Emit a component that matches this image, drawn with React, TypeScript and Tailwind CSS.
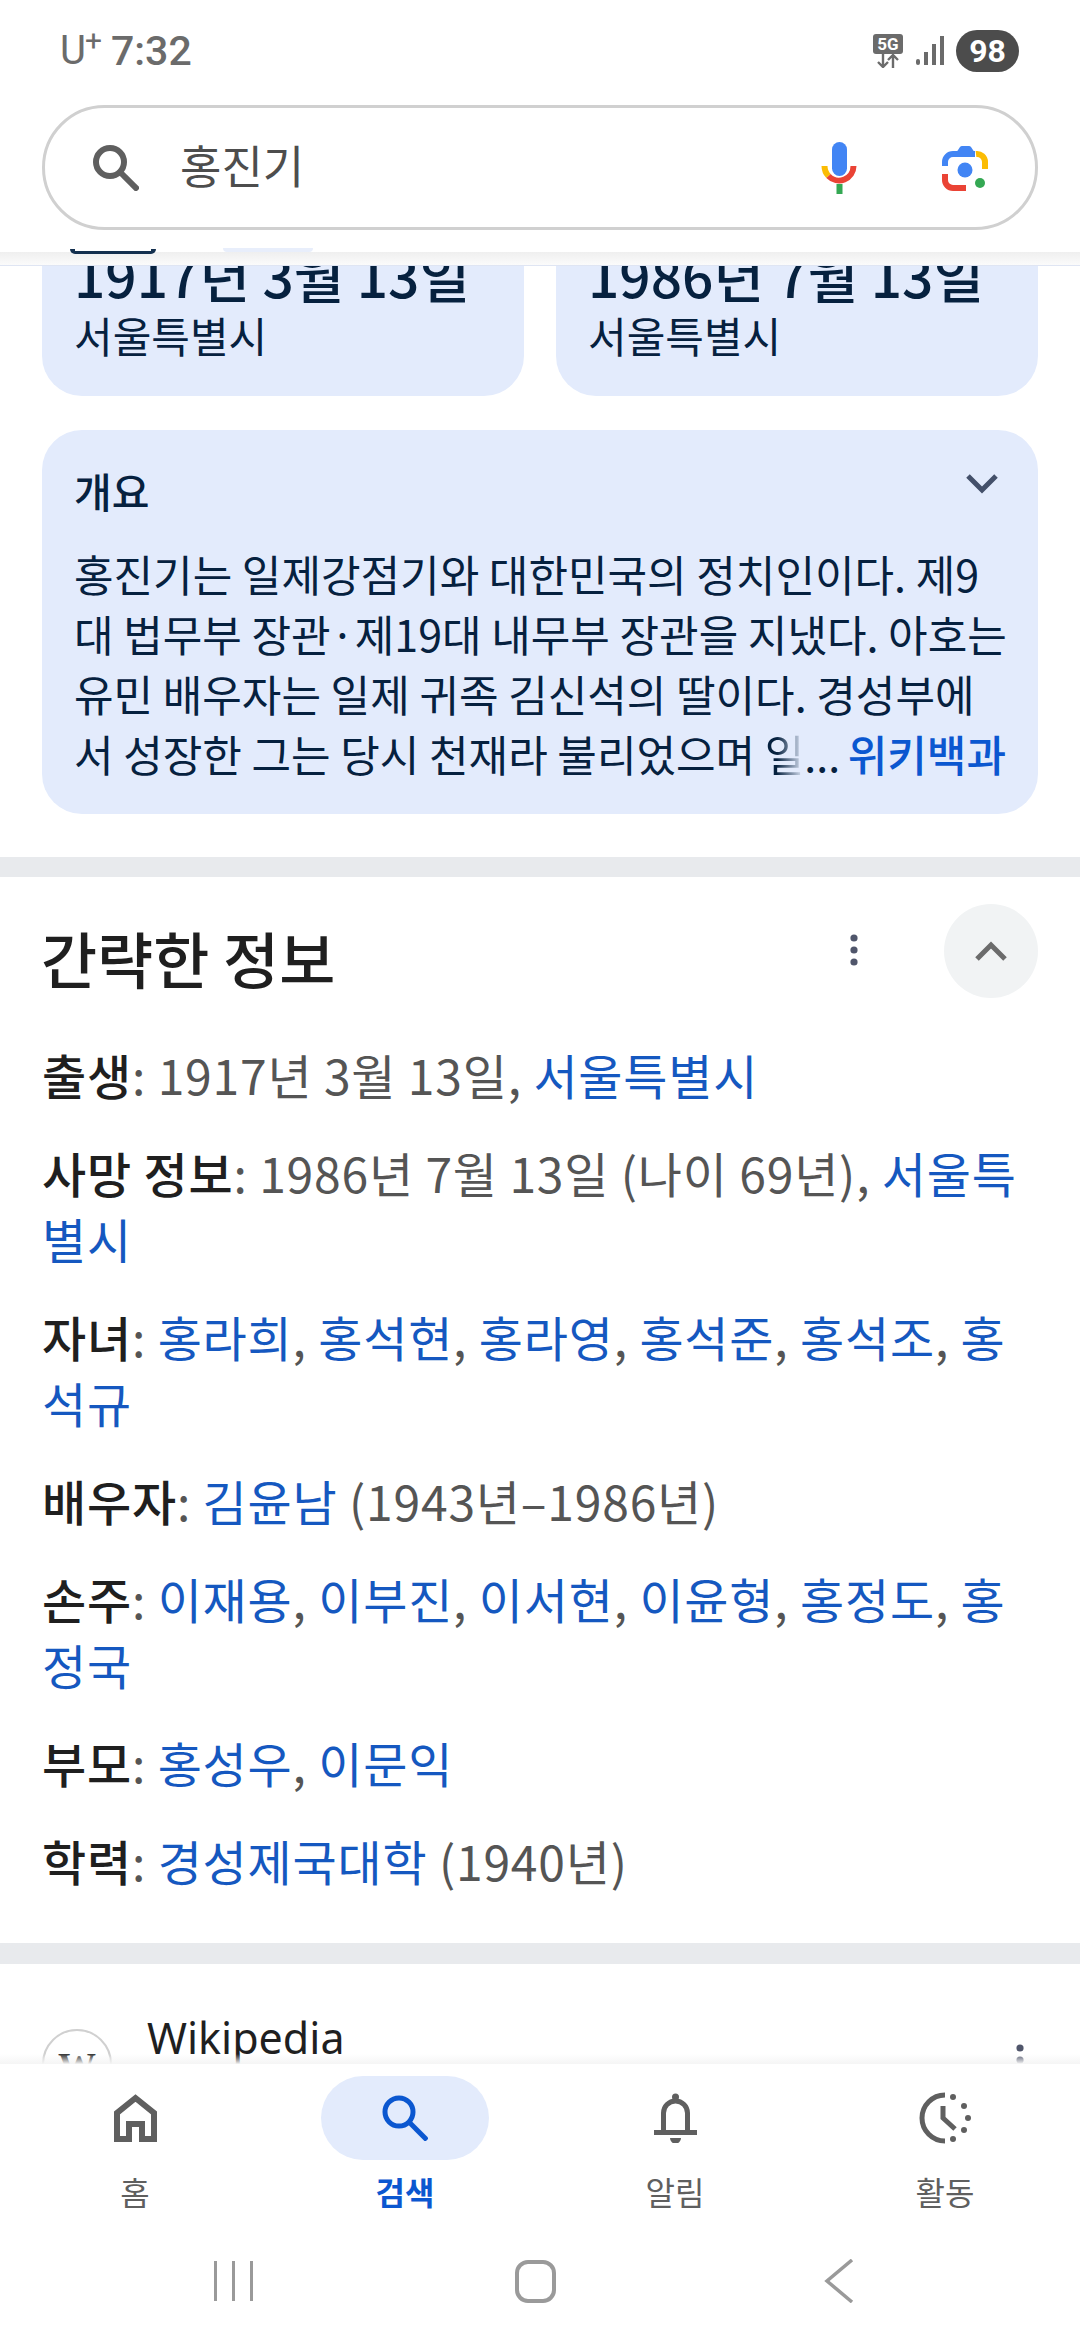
import React from 'react';

const FONT = "font-['Noto_Sans_CJK_KR','Noto_Sans',sans-serif]";

const SearchGlyph = ({ className, strokeWidth = 6 }: { className?: string; strokeWidth?: number }) => (
  <svg viewBox="0 0 46 46" fill="none" stroke="currentColor" strokeWidth={strokeWidth} className={className}>
    <circle cx="17" cy="17" r="14" />
    <path d="M27 27 45 45" />
  </svg>
);

const Kebab = ({ className }: { className?: string }) => (
  <svg viewBox="0 0 8 32" fill="currentColor" className={className}>
    <circle cx="4" cy="4" r="3.6" />
    <circle cx="4" cy="16" r="3.6" />
    <circle cx="4" cy="28" r="3.6" />
  </svg>
);

const MicIcon = () => (
  <svg viewBox="0 0 36 52" fill="none" className="w-[36px] h-[52px]">
    <rect x="11" y="0" width="15" height="34" rx="7.5" fill="#4285f4" />
    <path d="M3.5 24a14.5 14.5 0 0 0 4 10" stroke="#fbbc04" strokeWidth="6" />
    <path d="M7.5 34a14.5 14.5 0 0 0 25-10" stroke="#ea4335" strokeWidth="6" />
    <rect x="15.5" y="42" width="6" height="10" fill="#34a853" />
  </svg>
);

const LensIcon = () => (
  <svg viewBox="0 0 46 46" fill="none" className="w-[46px] h-[46px]">
    <path d="M3 21v-4a8 8 0 0 1 8-8h22" stroke="#4285f4" strokeWidth="6" />
    <path d="M14 8l4-6a3 3 0 0 1 2-1h7a3 3 0 0 1 2 1l4 6z" fill="#4285f4" />
    <path d="M34 9a8 8 0 0 1 9 8v7" stroke="#fbbc04" strokeWidth="6" />
    <path d="M3 29v6a8 8 0 0 0 8 8h13" stroke="#ea4335" strokeWidth="6" />
    <circle cx="23" cy="25" r="7.5" fill="#4285f4" />
    <circle cx="38" cy="38" r="5" fill="#34a853" />
  </svg>
);

const HomeIcon = () => (
  <svg viewBox="0 0 43 48" fill="none" stroke="#5f5f5f" strokeWidth="6" className="w-[43px] h-[48px]">
    <path d="M3 45V19L21.5 4 40 19v26H28V30H15v15z" />
  </svg>
);

const BellIcon = () => (
  <svg viewBox="0 0 43 50" fill="#5f5f5f" className="w-[43px] h-[50px]">
    <path d="M9.5 40V20a12 12 0 0 1 24 0v20" fill="none" stroke="#5f5f5f" strokeWidth="5" />
    <circle cx="21.5" cy="4" r="3.5" />
    <rect x="0" y="37" width="43" height="5" />
    <path d="M16 45h11a5.5 5.5 0 0 1-11 0z" />
  </svg>
);

const ClockIcon = () => (
  <svg viewBox="0 0 53 52" fill="#5f5f5f" className="w-[53px] h-[52px]">
    <path d="M26 3a23 23 0 0 0 0 46" fill="none" stroke="#5f5f5f" strokeWidth="5" />
    <path d="M24 14v12l12 11" fill="none" stroke="#5f5f5f" strokeWidth="5" />
    <circle cx="34" cy="5" r="3" />
    <circle cx="45" cy="14" r="3" />
    <circle cx="49" cy="26" r="3" />
    <circle cx="45" cy="38" r="3" />
    <circle cx="34" cy="47" r="3" />
  </svg>
);

const Chevron = ({ up, className }: { up?: boolean; className?: string }) => (
  <svg viewBox="0 0 32 20" fill="none" stroke="currentColor" strokeWidth="5" className={className}>
    <path d={up ? 'M2 18 16 4l14 14' : 'M2 2l14 14L30 2'} />
  </svg>
);

const StatusBar = () => (
  <div className="h-[105px] flex items-center justify-between pl-[60px] pr-[61px] pb-[4px] text-[#6b6b6b]">
    <div className="flex items-start font-['Roboto',sans-serif]">
      <span className="text-[40px] leading-[46px]">U</span>
      <span className="text-[30px] leading-[26px] mr-[9px] -ml-[1px]">+</span>
      <span className="text-[41px] leading-[46px] font-medium">7:32</span>
    </div>
    <div className="flex items-center">
      <div className="w-[30px] h-[34px] flex flex-col items-center mr-[13px]">
        <div className="w-[30px] h-[20px] rounded-[3px] bg-[#6b6b6b] text-white text-[17px] leading-[20px] font-bold text-center font-['Roboto',sans-serif]">
          5G
        </div>
        <svg viewBox="0 0 24 14" fill="none" stroke="#6b6b6b" strokeWidth="2.4" className="w-[24px] h-[14px]">
          <path d="M7 0v13M2 8l5 5 5-5M17 14V1M12 6l5-5 5 5" />
        </svg>
      </div>
      <svg viewBox="0 0 28 29" fill="#6b6b6b" className="w-[28px] h-[29px] mr-[12px]">
        <rect x="0" y="23" width="4" height="6" rx="2" />
        <rect x="8" y="16" width="4" height="13" />
        <rect x="16" y="8" width="4" height="21" />
        <rect x="24" y="0" width="4" height="29" />
      </svg>
      <div className="w-[63px] h-[42px] rounded-full bg-[#4c4c4c] text-white text-[32px] leading-[42px] font-bold text-center font-['Roboto',sans-serif]">
        98
      </div>
    </div>
  </div>
);

const SearchField = () => (
  <div className="mx-[42px] h-[125px] rounded-full border-[3px] border-[#d0d0d0] bg-white flex items-center pl-[48px] pr-[47px]">
    <SearchGlyph className="w-[46px] h-[46px] text-[#5f5f5f]" />
    <span className="ml-[41px] -mt-[6px] text-[45px] leading-[60px] text-[#4d4d4d]">홍진기</span>
    <div className="ml-auto flex items-center gap-[85px]">
      <MicIcon />
      <LensIcon />
    </div>
  </div>
);

const DateCard = ({ date }: { date: string }) => (
  <div className="flex-1 h-[130px] rounded-b-[40px] bg-[#e3ebfc] px-[32px] text-[#06213f]">
    <div className="h-[65px] -mt-[24px] text-[55px] leading-[65px] font-medium whitespace-nowrap">{date}</div>
    <div className="text-[42px] leading-[56px]">서울특별시</div>
  </div>
);

const Link = ({ children }: { children: React.ReactNode }) => <span className="text-[#1558c0]">{children}</span>;

const InfoRow = ({ label, children }: { label: string; children: React.ReactNode }) => (
  <p className="text-[48px] leading-[66px] tracking-[0.8px] text-[#555]">
    <span className="text-[#1f1f1f] font-medium">{label}</span>: {children}
  </p>
);

const NavItem = ({ label, icon, active }: { label: string; icon: React.ReactNode; active?: boolean }) => (
  <div className="w-[270px] flex flex-col items-center">
    <div className={`w-[168px] h-[84px] rounded-full flex items-center justify-center ${active ? 'bg-[#e3ebfc]' : ''}`}>{icon}</div>
    <span className={`mt-[9px] text-[32px] leading-[44px] ${active ? 'font-bold text-[#0b57d0]' : 'text-[#5f5f5f]'}`}>{label}</span>
  </div>
);

export default function App() {
  return (
    <div className={`${FONT} w-[1080px] h-[2340px] flex flex-col overflow-hidden bg-white`}>
      <header className="relative z-10 h-[266px] shrink-0 bg-white">
        <StatusBar />
        <SearchField />
        <div className="absolute inset-x-0 bottom-0 h-[14px] bg-gradient-to-b from-[#efefef] to-[#fbfbfb] border-b-[1px] border-[#dfe5f3]" />
        {/* bottoms of the chips scrolled under the header */}
        <div className="absolute left-[70px] top-[249px] w-[86px] h-[5px] rounded-b-[30px] bg-[#14304f]" />
        <div className="absolute left-[75px] top-[249px] w-[76px] h-[2px] bg-white" />
        <div className="absolute left-[223px] top-[248px] w-[90px] h-[4px] rounded-b-[30px] bg-[#e8eefb]" />
      </header>

      <main className="flex-1 overflow-hidden">
        <section className="px-[42px] pb-[43px]">
          <div className="flex gap-[32px]">
            <DateCard date="1917년 3월 13일" />
            <DateCard date="1986년 7월 13일" />
          </div>
          <div className="mt-[34px] h-[384px] rounded-[40px] bg-[#e3ebfc] px-[32px] pt-[32px] text-[#06213f]">
            <div className="flex justify-between items-start">
              <span className="text-[41px] leading-[56px] font-medium">개요</span>
              <Chevron className="w-[32px] h-[20px] mt-[12px] mr-[8px] text-[#44506a]" />
            </div>
            <div className="mt-[25px] text-[43px] leading-[60px] whitespace-nowrap flex flex-col">
              <div>홍진기는 일제강점기와 대한민국의 정치인이다. 제9</div>
              <div>대 법무부 장관·제19대 내무부 장관을 지냈다. 아호는</div>
              <div>유민 배우자는 일제 귀족 김신석의 딸이다. 경성부에</div>
              <div className="flex justify-between">
                <span>
                  서 성장한 그는 당시 천재라 불리었으며{' '}
                  <span className="bg-gradient-to-r from-[#06213f] from-30% to-transparent bg-clip-text text-transparent">일</span>...
                </span>
                <span className="text-[#0b57d0] font-medium">위키백과</span>
              </div>
            </div>
          </div>
        </section>

        <div className="h-[20px] bg-[#e8eaed]" />

        <section className="px-[42px] pt-[27px] pb-[50px]">
          <div className="flex items-center">
            <h2 className="translate-y-[7px] text-[61px] leading-[94px] font-medium text-[#1f1f1f] -ml-[1px]">간략한 정보</h2>
            <Kebab className="ml-auto mb-[2px] w-[8px] h-[32px] text-[#50566b]" />
            <div className="ml-[86px] w-[94px] h-[94px] rounded-full bg-[#f1f3f4] flex items-center justify-center">
              <Chevron up className="w-[32px] h-[20px] text-[#6b6b6b]" />
            </div>
          </div>
          <div className="mt-[43px] flex flex-col gap-[32px]">
            <InfoRow label="출생">
              1917년 3월 13일, <Link>서울특별시</Link>
            </InfoRow>
            <InfoRow label="사망 정보">
              1986년 7월 13일 (나이 69년), <Link>서울특별시</Link>
            </InfoRow>
            <InfoRow label="자녀">
              <Link>홍라희</Link>, <Link>홍석현</Link>, <Link>홍라영</Link>, <Link>홍석준</Link>, <Link>홍석조</Link>, <Link>홍석규</Link>
            </InfoRow>
            <InfoRow label="배우자">
              <Link>김윤남</Link> (1943년–1986년)
            </InfoRow>
            <InfoRow label="손주">
              <Link>이재용</Link>, <Link>이부진</Link>, <Link>이서현</Link>, <Link>이윤형</Link>, <Link>홍정도</Link>, <Link>홍정국</Link>
            </InfoRow>
            <InfoRow label="부모">
              <Link>홍성우</Link>, <Link>이문익</Link>
            </InfoRow>
            <InfoRow label="학력">
              <Link>경성제국대학</Link> (1940년)
            </InfoRow>
          </div>
        </section>

        <div className="h-[21px] bg-[#e8eaed]" />

        <section className="flex px-[42px] pt-[46px]">
          <div className="w-[70px] h-[70px] mt-[19px] rounded-full border-[2px] border-[#d0d0d0] flex justify-center">
            <span className="mt-[17px] font-['Liberation_Serif',serif] text-[38px] leading-[36px] font-bold text-[#333]">W</span>
          </div>
          <span className="ml-[35px] text-[43px] leading-[56px] text-[#1f1f1f] font-['Noto_Sans',sans-serif]">Wikipedia</span>
          <Kebab className="ml-auto mt-[34px] mr-[14px] w-[8px] h-[32px] text-[#50566b]" />
        </section>
      </main>

      <nav className="relative z-10 h-[276px] shrink-0 bg-white">
        <div className="absolute inset-x-0 -top-[10px] h-[10px] bg-gradient-to-b from-transparent to-[#f5f5f5]" />
        <div className="flex pt-[12px]">
          <NavItem label="홈" icon={<HomeIcon />} />
          <NavItem label="검색" active icon={<SearchGlyph strokeWidth={5} className="w-[46px] h-[46px] text-[#0b57d0]" />} />
          <NavItem label="알림" icon={<BellIcon />} />
          <NavItem label="활동" icon={<ClockIcon />} />
        </div>
        <div className="mt-[46px] flex items-center justify-center pr-[13px]">
          <div className="flex gap-[15px]">
            <div className="w-[3px] h-[40px] bg-[#9a9a9a]" />
            <div className="w-[3px] h-[40px] bg-[#9a9a9a]" />
            <div className="w-[3px] h-[40px] bg-[#9a9a9a]" />
          </div>
          <div className="ml-[262px] w-[41px] h-[43px] rounded-[13px] border-[4px] border-[#9a9a9a]" />
          <svg viewBox="0 0 30 44" fill="none" stroke="#9a9a9a" strokeWidth="3.5" className="ml-[268px] w-[30px] h-[44px]">
            <path d="M28 1 3 22l25 21" />
          </svg>
        </div>
      </nav>
    </div>
  );
}
